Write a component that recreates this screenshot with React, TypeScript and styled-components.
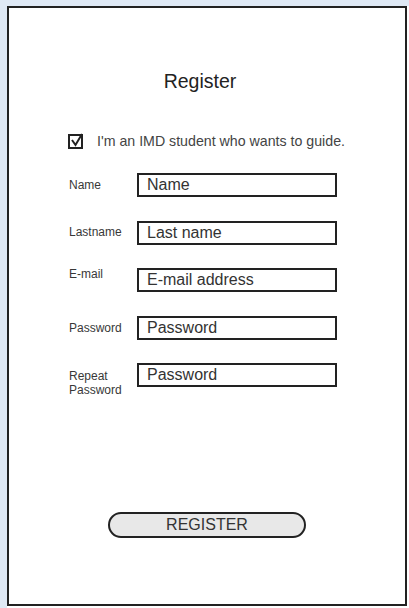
import styled, { createGlobalStyle } from "styled-components";

const GlobalStyle = createGlobalStyle`
  html, body {
    margin: 0;
    padding: 0;
    background: #ffffff;
    font-family: "Liberation Sans", Arial, sans-serif;
  }
`;

const Page = styled.div`
  width: 409px;
  height: 608px;
  box-sizing: border-box;
  border-top: 6px solid #dfe9f5;
  border-left: 7px solid #dfe9f5;
`;

const Frame = styled.div`
  width: 400px;
  height: 600px;
  box-sizing: border-box;
  border: 2px solid #222222;
  display: flex;
  flex-direction: column;
  padding: 62px 0 66px 0;
`;

const Title = styled.h1`
  margin: 0 14px 0 0;
  align-self: center;
  font-size: 19.5px;
  line-height: 22px;
  font-weight: normal;
  color: #222222;
`;

const CheckRow = styled.label`
  display: flex;
  align-items: center;
  gap: 13px;
  margin: 41px 0 0 59px;
  font-size: 14.2px;
  line-height: 15px;
  color: #444444;
`;

const Box = styled.svg`
  display: block;
  flex: none;
`;

const Form = styled.div`
  display: flex;
  flex-direction: column;
  gap: 23.5px;
  margin: 24px 0 0 60px;
`;

const Row = styled.div`
  display: flex;
  align-items: flex-start;
`;

const Label = styled.span<{ $shift: number }>`
  width: 68px;
  flex: none;
  margin-top: ${(p) => p.$shift}px;
  font-size: 12px;
  line-height: 14px;
  color: #383838;
`;

const Field = styled.div`
  width: 200px;
  height: 24px;
  box-sizing: border-box;
  border: 2px solid #222222;
  padding: 0 0 0 8px;
  font-size: 16px;
  line-height: 19px;
  color: #333333;
`;

const Button = styled.div`
  margin-top: auto;
  align-self: center;
  width: 198px;
  height: 26px;
  box-sizing: border-box;
  border: 2px solid #222222;
  border-radius: 13px;
  background: #e8e8e8;
  font-size: 16px;
  line-height: 21px;
  text-align: center;
  color: #333333;
`;

const fields = [
  { label: "Name", placeholder: "Name", shift: 5 },
  { label: "Lastname", placeholder: "Last name", shift: 4 },
  { label: "E-mail", placeholder: "E-mail address", shift: -1 },
  { label: "Password", placeholder: "Password", shift: 5 },
  { label: "Repeat\nPassword", placeholder: "Password", shift: 6 },
];

export default function App() {
  return (
    <>
      <GlobalStyle />
      <Page>
        <Frame>
          <Title>Register</Title>
          <CheckRow>
            <Box width="16" height="16" viewBox="0 0 16 16">
              <rect x="1" y="2" width="13" height="13" fill="none" stroke="#222" strokeWidth="2" />
              <path d="M4 7 L7.5 12 L14 1" fill="none" stroke="#222" strokeWidth="2" />
            </Box>
            I'm an IMD student who wants to guide.
          </CheckRow>
          <Form>
            {fields.map((f, i) => (
              <Row key={i}>
                <Label $shift={f.shift}>
                  {f.label.split("\n").map((l, j) => (
                    <div key={j}>{l}</div>
                  ))}
                </Label>
                <Field>{f.placeholder}</Field>
              </Row>
            ))}
          </Form>
          <Button>REGISTER</Button>
        </Frame>
      </Page>
    </>
  );
}
